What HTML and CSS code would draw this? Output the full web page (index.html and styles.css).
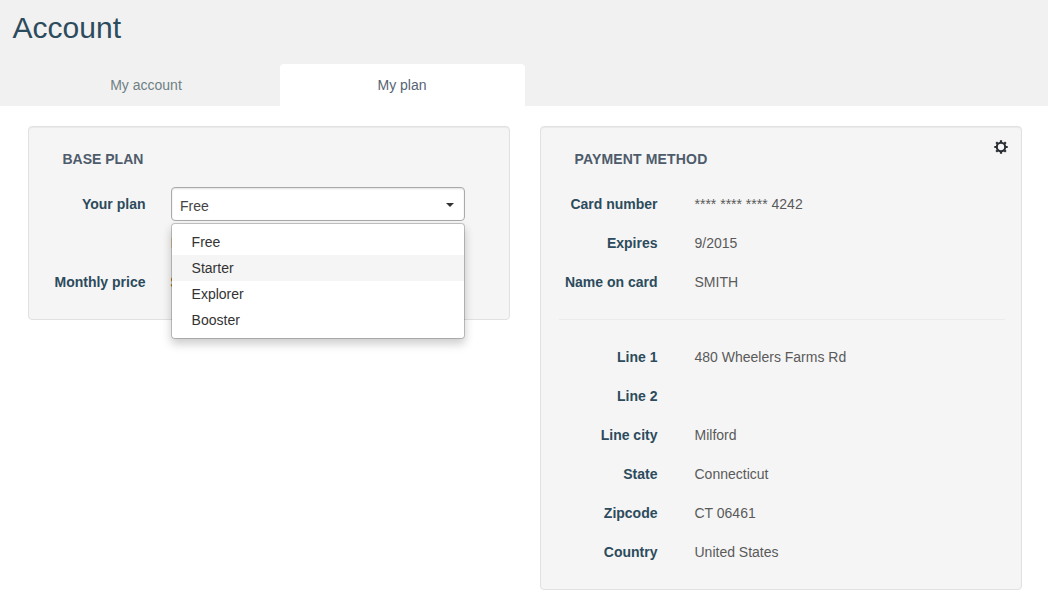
FILE: index.html
```html
<!DOCTYPE html>
<html lang="en">
<head>
<meta charset="utf-8">
<title>Account</title>
<link rel="stylesheet" href="styles.css">
</head>
<body>
<header class="header">
  <h1 class="title">Account</h1>
  <nav class="tabs">
    <a class="tab tab-account">My account</a>
    <a class="tab tab-active">My plan</a>
  </nav>
</header>
<main class="content">
  <section class="well base-plan">
    <h2 class="heading">BASE PLAN</h2>
    <div class="row">
      <span class="label">Your plan</span>
      <div class="select">
        <span>Free</span>
        <svg class="caret" width="8" height="4" viewBox="0 0 8 4"><path d="M0 0h8L4 4z" fill="#333"/></svg>
        <ul class="menu">
          <li class="option">Free</li>
          <li class="option option-hover">Starter</li>
          <li class="option">Explorer</li>
          <li class="option">Booster</li>
        </ul>
      </div>
    </div>
    <div class="row"><span class="label"></span><span class="value note">I</span></div>
    <div class="row"><span class="label">Monthly price</span><span class="value price">$</span></div>
  </section>
  <section class="well payment">
    <svg class="gear" width="14" height="14" viewBox="0 0 14 14" fill="none" stroke="#292e33">
      <circle cx="7" cy="7" r="4.2" stroke-width="2.1"/>
      <path stroke-width="2.2" d="M7 .3v2M7 11.7v2M.3 7h2M11.7 7h2M2.2 2.2l1.4 1.4M10.4 10.4l1.4 1.4M11.8 2.2l-1.4 1.4M3.6 10.4l-1.4 1.4"/>
    </svg>
    <h2 class="heading">PAYMENT METHOD</h2>
    <div class="row"><span class="label">Card number</span><span class="value">**** **** **** 4242</span></div>
    <div class="row"><span class="label">Expires</span><span class="value">9/2015</span></div>
    <div class="row"><span class="label">Name on card</span><span class="value">SMITH</span></div>
    <hr class="divider">
    <div class="row"><span class="label">Line 1</span><span class="value">480 Wheelers Farms Rd</span></div>
    <div class="row"><span class="label">Line 2</span><span class="value"></span></div>
    <div class="row"><span class="label">Line city</span><span class="value">Milford</span></div>
    <div class="row"><span class="label">State</span><span class="value">Connecticut</span></div>
    <div class="row"><span class="label">Zipcode</span><span class="value">CT 06461</span></div>
    <div class="row"><span class="label">Country</span><span class="value">United States</span></div>
  </section>
</main>
</body>
</html>
```
FILE: styles.css
```css
* { box-sizing: border-box; }
body {
  margin: 0;
  height: 597px;
  overflow: hidden;
  background: #fff;
  color: #5a5a5a;
  font: 14px/20px "Liberation Sans", Arial, sans-serif;
}
.header {
  height: 106px;
  background: #f1f1f1;
  display: flex;
  flex-direction: column;
  justify-content: space-between;
}
.title {
  margin: 8px 0 0 12.6px;
  font-size: 30px;
  line-height: 40px;
  font-weight: 400;
  color: #2c4b5c;
}
.tabs { display: flex; }
.tab {
  height: 42px;
  line-height: 42px;
  text-align: center;
  color: #6f7f84;
}
.tab-account { width: 245px; margin: 0 11.5px 0 23.5px; }
.tab-active {
  width: 245px;
  padding-right: 1px;
  background: #fff;
  color: #566474;
  border-radius: 4px 4px 0 0;
}
.content {
  display: flex;
  align-items: flex-start;
  gap: 30px;
  padding: 20px 26px 0 28px;
}
.well {
  position: relative;
  width: 482px;
  padding-top: 22px;
  background: #f5f5f5;
  border: 1px solid #e1e1e1;
  border-radius: 4px;
  box-shadow: inset 0 1px 1px rgba(0, 0, 0, .05);
}
.base-plan { height: 194px; }
.payment { height: 464px; }
.heading {
  margin: 0 0 16px 33.5px;
  font-size: 14px;
  line-height: 20px;
  font-weight: 700;
  color: #4e5b6b;
}
.payment .heading { letter-spacing: .16px; }
.row {
  display: flex;
  align-items: flex-start;
  height: 39px;
  padding-top: 9px;
}
.label {
  flex: none;
  width: 116.5px;
  margin-right: 25.5px;
  text-align: right;
  font-weight: 700;
  color: #2c4b5c;
}
.payment .label { margin-right: 37px; }
.note, .price { margin-left: -.6px; }
.note { color: #a88; }
.price { color: #a73; }
.select {
  position: relative;
  display: flex;
  align-items: center;
  justify-content: space-between;
  width: 294px;
  height: 34px;
  margin-top: -7px;
  padding: 3px 10px 0 8px;
  background: #fff;
  border: 1px solid #aaa;
  border-radius: 4px;
  box-shadow: inset 0 1px 2px rgba(0, 0, 0, .12);
  color: #444;
}
.caret { margin-top: -2px; }
.menu {
  position: absolute;
  z-index: 1;
  top: 35px;
  left: -1px;
  width: 294px;
  height: 116px;
  margin: 0;
  padding: 5px 0;
  list-style: none;
  background: #fff;
  background-clip: padding-box;
  border: 1px solid rgba(0, 0, 0, .2);
  border-radius: 4px;
  box-shadow: 0 5px 10px rgba(0, 0, 0, .2);
}
.option {
  height: 26px;
  padding-left: 19.6px;
  line-height: 26px;
  color: #333;
}
.option-hover { background: #f5f5f5; }
.gear {
  position: absolute;
  top: 13px;
  right: 13.5px;
}
.divider {
  height: 1px;
  margin: 17px 16px 18px 18px;
  border: 0;
  background: #ebebeb;
}
```
